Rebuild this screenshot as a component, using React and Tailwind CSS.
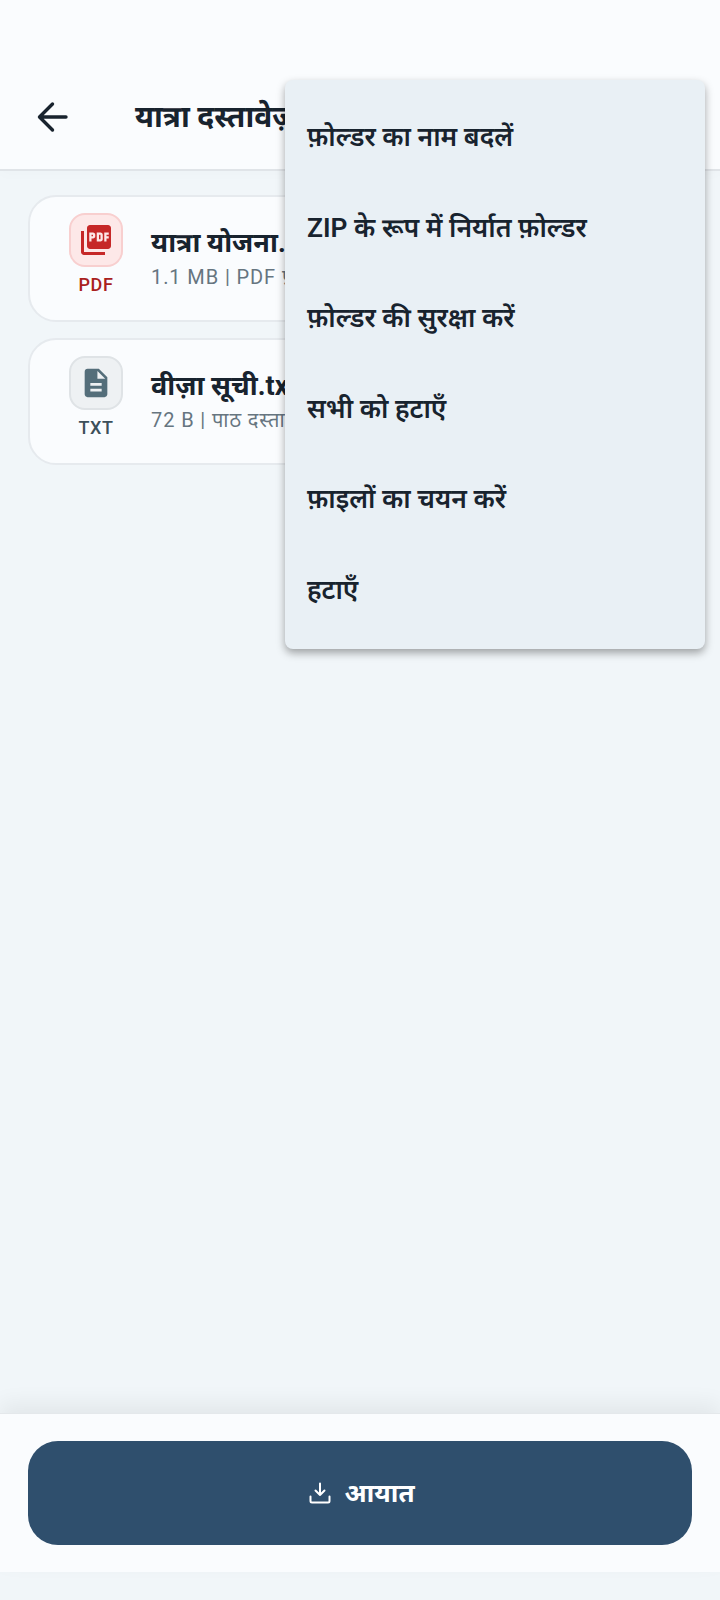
import React from "react";
import { MdPictureAsPdf, MdDescription } from "react-icons/md";

const FONT = "font-['Roboto','Noto_Sans_Devanagari','Noto_Sans','Lohit_Devanagari',sans-serif]";

function FileCard({ icon, label, boxClass, labelClass, title, meta }) {
  return (
    <div className="flex h-[127px] items-center rounded-[28px] border-2 border-[#e6eaee] bg-[#fafcfe]">
      <div className="flex w-[132px] shrink-0 flex-col items-center pb-[8px]">
        <div className={`flex h-[54px] w-[54px] items-center justify-center rounded-[16px] border-2 ${boxClass}`}>
          {icon}
        </div>
        <div className={`mt-[7px] text-[18px] leading-[22px] font-medium tracking-[0.6px] ${labelClass}`}>{label}</div>
      </div>
      <div className="-ml-[11px] min-w-0 flex-1">
        <div className="whitespace-nowrap text-[27px] leading-[36px] font-bold text-[#18232e]">{title}</div>
        <div className="whitespace-nowrap text-[20px] leading-[32px] tracking-[0.9px] text-[#667580]">{meta}</div>
      </div>
    </div>
  );
}

const MENU = [
  "फ़ोल्डर का नाम बदलें",
  "ZIP के रूप में निर्यात फ़ोल्डर",
  "फ़ोल्डर की सुरक्षा करें",
  "सभी को हटाएँ",
  "फ़ाइलों का चयन करें",
  "हटाएँ",
];

export default function App() {
  return (
    <div className={`relative flex h-[1600px] w-[720px] flex-col overflow-hidden bg-[#f1f6f9] ${FONT}`}>
      <header className="relative flex h-[171px] shrink-0 items-end border-b-2 border-[#e0e4e8] bg-[#fafcfe] pb-[24px] shadow-[0_4px_12px_rgba(0,0,0,0.015)]">
        <div className="flex h-[56px] w-[135px] shrink-0 items-center pl-[37px]">
          <svg width="32" height="32" viewBox="0 0 32 32" fill="none" stroke="#18232e" strokeWidth="3.4" strokeLinecap="round" strokeLinejoin="round">
            <path d="M29 16H3M15.500 3 2.500 16l13 13" />
          </svg>
        </div>
        <h1 className="whitespace-nowrap text-[30px] leading-[56px] font-bold text-[#18232e]">यात्रा दस्तावेज़</h1>
      </header>

      <main className="flex flex-1 flex-col gap-[16px] px-[28px] pt-[24px]">
        <FileCard
          icon={<MdPictureAsPdf className="text-[#c62828]" size={36} />}
          label="PDF"
          boxClass="border-[#f8cfcf] bg-[#fde8e8]"
          labelClass="text-[#a92020]"
          title="यात्रा योजना.pdf"
          meta="1.1 MB | PDF फ़ाइल"
        />
        <FileCard
          icon={<MdDescription className="text-[#546e7a]" size={34} />}
          label="TXT"
          boxClass="border-[#dfe3e6] bg-[#eef1f3]"
          labelClass="text-[#3c4f5a]"
          title="वीज़ा सूची.txt"
          meta="72 B | पाठ दस्तावेज़"
        />
      </main>

      <footer className="mb-[28px] flex h-[159px] shrink-0 items-center border-t border-[#e4e8eb] bg-[#fafcfe] px-[28px] shadow-[0_-10px_20px_rgba(0,0,0,0.06)]">
        <button className="flex h-[104px] w-full items-center justify-center gap-[12px] rounded-[30px] bg-[#2f4f6d] pl-[3px] text-[26px] font-bold text-white">
          <svg width="24" height="24" viewBox="0 0 24 24" fill="none" stroke="white" strokeWidth="2" strokeLinecap="round" strokeLinejoin="round">
            <path d="M12 2.500V14M7.500 9.500 12 14l4.500-4.500M2.500 15.500V20a1.500 1.500 0 0 0 1.500 1.500h16a1.500 1.500 0 0 0 1.500-1.500v-4.500" />
          </svg>
          आयात
        </button>
      </footer>

      <div className="absolute left-[285px] top-[80px] w-[420px] rounded-[8px] bg-[#e9f0f5] py-[13px] shadow-[0_4px_8px_rgba(0,0,0,0.35)]">
        {MENU.map((m) => (
          <div key={m} className="flex h-[90.500px] items-center whitespace-nowrap px-[22px] text-[26.400px] font-semibold text-[#18232e]">
            {m}
          </div>
        ))}
      </div>
    </div>
  );
}
